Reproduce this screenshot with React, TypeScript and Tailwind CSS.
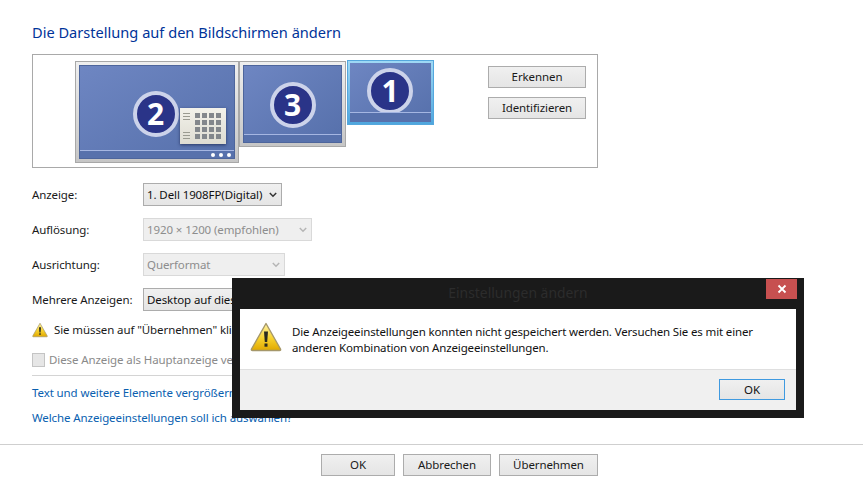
import React from "react";

function WarningIcon({ size, id }: { size: number; id: string }) {
  return (
    <svg width={size} height={size} viewBox="0 0 32 32" className="shrink-0">
      <defs>
        <linearGradient id={id} x1="0" y1="0" x2="0" y2="1">
          <stop offset="0" stopColor="#fff3a8" />
          <stop offset="0.55" stopColor="#f7d22e" />
          <stop offset="1" stopColor="#e0a800" />
        </linearGradient>
      </defs>
      <path
        d="M16 2.5 L30.5 28 Q31 29.5 29.5 29.5 L2.5 29.5 Q1 29.5 1.5 28 Z"
        fill={`url(#${id})`}
        stroke="#a5976a"
        strokeWidth="1.4"
        strokeLinejoin="round"
      />
      <path d="M14 10.5 L18 10.5 L17.2 21 L14.8 21 Z" fill="#2b2b20" />
      <rect x="14.5" y="22.5" width="3" height="3.2" fill="#2b2b20" />
    </svg>
  );
}

function Chevron({ color }: { color: string }) {
  return (
    <svg width="8" height="6" viewBox="0 0 8 6" className="shrink-0">
      <path d="M0.8 1 L4 4.2 L7.2 1" fill="none" stroke={color} strokeWidth="1.5" />
    </svg>
  );
}

function Btn({ label, className }: { label: string; className: string }) {
  return (
    <div
      className={`h-[22px] flex items-center justify-center border border-[#acacac] bg-gradient-to-b from-[#f0f0f0] to-[#e5e5e5] text-[11.5px] tracking-[-0.1px] text-[#1a1a1a] ${className}`}
    >
      {label}
    </div>
  );
}

function FieldRow({
  label,
  value,
  width,
  disabled,
}: {
  label: string;
  value: string;
  width: string;
  disabled?: boolean;
}) {
  return (
    <div className="flex items-center h-[23px]">
      <div className="w-[111px] text-[11.5px] tracking-[-0.1px] text-[#1a1a1a]">{label}</div>
      <div
        className={`h-[23px] flex items-center justify-between pl-[3px] pr-[4px] border text-[11.5px] tracking-[-0.1px] ${width} ${
          disabled
            ? "border-[#d9d9d9] bg-[#efefef] text-[#8d8d8d]"
            : "border-[#acacac] bg-gradient-to-b from-[#f0f0f0] to-[#e5e5e5] text-[#111]"
        }`}
      >
        <span className="whitespace-nowrap">{value}</span>
        <Chevron color={disabled ? "#b5b5b5" : "#333"} />
      </div>
    </div>
  );
}

function Badge({ n }: { n: number }) {
  return (
    <div className="w-[46px] h-[46px] rounded-full border-[4px] border-[#ccd3ea] bg-[#2a3488] flex items-center justify-center text-white text-[30px] font-bold leading-none">
      {n}
    </div>
  );
}

function CalendarThumb() {
  return (
    <div className="absolute left-[100px] top-[42px] w-[46px] h-[36px] bg-gradient-to-b from-[#f2f1ea] to-[#dedcd2] shadow-[0_1px_3px_rgba(20,30,70,0.7)] flex items-center pl-[3px] pr-[4px] gap-[5px]">
      <div className="w-[7px] h-full flex flex-col justify-between py-[5px]">
        <div className="flex flex-col gap-[2px]">
          <div className="h-px bg-[#9a9a90]" />
          <div className="h-px bg-[#9a9a90]" />
          <div className="h-px bg-[#9a9a90]" />
        </div>
        <div className="flex flex-col gap-[2px]">
          <div className="h-px bg-[#9a9a90]" />
          <div className="h-px bg-[#9a9a90]" />
          <div className="h-px bg-[#9a9a90]" />
        </div>
      </div>
      <div className="grid grid-cols-4 gap-[2px]">
        {Array.from({ length: 16 }).map((_, i) => (
          <div key={i} className="w-[5px] h-[5px] bg-[#83878c]" />
        ))}
      </div>
    </div>
  );
}

export default function App() {
  return (
    <div
      className="relative w-[863px] h-[483px] bg-white overflow-hidden flex flex-col"
      style={{ fontFamily: '"Noto Sans", "Open Sans", sans-serif' }}
    >
      <div className="pl-[32px] w-[598px] box-content flex flex-col">
        <h1 className="mt-[22px] h-[20px] leading-[20px] text-[14.6px] text-[#003399] font-normal">
          Die Darstellung auf den Bildschirmen ändern
        </h1>

        {/* preview box */}
        <div className="mt-[12px] w-[566px] h-[114px] border border-[#a9a9a9] flex items-start pl-[42px] pt-[5px] pr-[11px]">
          <div className="w-[164px] h-[102px] mt-px p-[3px] bg-gradient-to-b from-[#efefef] to-[#c6c6c6] border border-[#a8a8a8] shrink-0">
            <div className="relative w-full h-full bg-gradient-to-br from-[#6e86c2] to-[#5670ab] flex flex-col border border-[#4d659c]">
              <div className="flex-1 flex items-center justify-center pt-[11px] pr-[3px]">
                <Badge n={2} />
              </div>
              <CalendarThumb />
              <div className="h-[8px] border-t border-[#a5b6e2] bg-[#5771ac] flex items-center justify-end gap-[4px] pr-[3px]">
                <div className="w-[4px] h-[4px] rounded-full bg-white" />
                <div className="w-[4px] h-[4px] rounded-full bg-white" />
                <div className="w-[4px] h-[4px] rounded-full bg-white" />
              </div>
            </div>
          </div>
          <div className="w-[107px] h-[86px] mt-px p-[3px] bg-gradient-to-b from-[#efefef] to-[#c6c6c6] border border-[#a8a8a8] shrink-0">
            <div className="w-full h-full bg-gradient-to-br from-[#6e86c2] to-[#5670ab] flex flex-col border border-[#4d659c]">
              <div className="flex-1 flex items-center justify-center pt-[10px]">
                <Badge n={3} />
              </div>
              <div className="h-[8px] border-t border-[#a5b6e2] bg-[#5771ac]" />
            </div>
          </div>
          <div className="w-[87px] h-[65px] ml-px p-[2px] bg-gradient-to-b from-[#9fd9f5] to-[#4ea6de] border border-[#55a8dd] shrink-0">
            <div className="w-full h-full bg-gradient-to-br from-[#6e86c2] to-[#5670ab] flex flex-col">
              <div className="h-[49px] shrink-0 flex items-center justify-center pt-[7px] pr-[1px]">
                <Badge n={1} />
              </div>
              <div className="flex-1 border-t border-[#a5b6e2] bg-[#5771ac]" />
            </div>
          </div>
          <div className="ml-auto mt-[6px] flex flex-col gap-[9px]">
            <Btn label="Erkennen" className="w-[98px]" />
            <Btn label="Identifizieren" className="w-[98px]" />
          </div>
        </div>

        {/* fields */}
        <div className="mt-[15px] flex flex-col gap-[12px]">
          <FieldRow label="Anzeige:" value="1. Dell 1908FP(Digital)" width="w-[139px]" />
          <FieldRow label="Auflösung:" value="1920 × 1200 (empfohlen)" width="w-[169px]" disabled />
          <FieldRow label="Ausrichtung:" value="Querformat" width="w-[142px]" disabled />
          <FieldRow label="Mehrere Anzeigen:" value="Desktop auf diesen Anzeigen" width="w-[200px]" />
        </div>

        <div className="mt-[11px] flex items-center gap-[6px] h-[16px] text-[11.5px] tracking-[-0.1px] text-[#1a1a1a]">
          <WarningIcon size={16} id="warn-small" />
          <span className="whitespace-nowrap">Sie müssen auf "Übernehmen" klicken</span>
        </div>

        <div className="mt-[15px] flex items-center gap-[4px] h-[14px] text-[11.5px] tracking-[-0.1px] text-[#8a8a8a]">
          <div className="w-[13px] h-[14px] border border-[#c4c4c4] bg-[#e6e6e6]" />
          <span className="whitespace-nowrap">Diese Anzeige als Hauptanzeige verwenden</span>
        </div>

        <div className="mt-[8px] h-px w-[566px] bg-[#d4d4d4]" />

        <div className="mt-[8px] h-[17px] leading-[17px] text-[11.5px] tracking-[-0.1px] text-[#0a5fb0] whitespace-nowrap">
          Text und weitere Elemente vergrößern
        </div>
        <div className="mt-[8px] h-[17px] leading-[17px] text-[11.5px] tracking-[-0.1px] text-[#0a5fb0] whitespace-nowrap">
          Welche Anzeigeeinstellungen soll ich auswählen?
        </div>
      </div>

      {/* footer */}
      <div className="mt-[18px] h-px w-full bg-[#cfcfcf]" />
      <div className="mt-[9px] pl-[321px] flex gap-[8px]">
        <Btn label="OK" className="w-[74px]" />
        <Btn label="Abbrechen" className="w-[88px]" />
        <Btn label="Übernehmen" className="w-[99px]" />
      </div>

      {/* error dialog */}
      <div className="absolute left-[232px] top-[278px] w-[572px] h-[140px] bg-[#1a1a1a] flex flex-col px-[8px] pb-[8px]">
        <div className="relative h-[31px] flex items-center justify-center text-[13.9px] text-[#2c2c2c]">
          Einstellungen ändern
          <div className="absolute right-[-1px] top-[1px] w-[31px] h-[20px] bg-[#c75050] flex items-center justify-center">
            <svg width="10" height="10" viewBox="0 0 10 10">
              <path d="M1.5 1.5 L8.5 8.5 M8.5 1.5 L1.5 8.5" stroke="#fff" strokeWidth="1.8" />
            </svg>
          </div>
        </div>
        <div className="flex-1 bg-white flex flex-col">
          <div className="h-[60px] flex items-start pl-[10px] pt-[12px] gap-[10px] text-[11.5px] tracking-[-0.15px] leading-[16px] text-[#111]">
            <WarningIcon size={32} id="warn-large" />
            <p className="pt-[3px] w-[490px]">
              Die Anzeigeeinstellungen konnten nicht gespeichert werden. Versuchen Sie es mit einer anderen Kombination von Anzeigeeinstellungen.
            </p>
          </div>
          <div className="flex-1 bg-[#f0f0f0] border-t border-[#dfdfdf] flex items-start justify-end pt-[9px] pr-[11px]">
            <div className="w-[66px] h-[21px] flex items-center justify-center border border-[#3f9ae0] bg-gradient-to-b from-[#f0f0f0] to-[#e5e5e5] text-[11.5px] text-[#111]">
              OK
            </div>
          </div>
        </div>
      </div>
    </div>
  );
}
